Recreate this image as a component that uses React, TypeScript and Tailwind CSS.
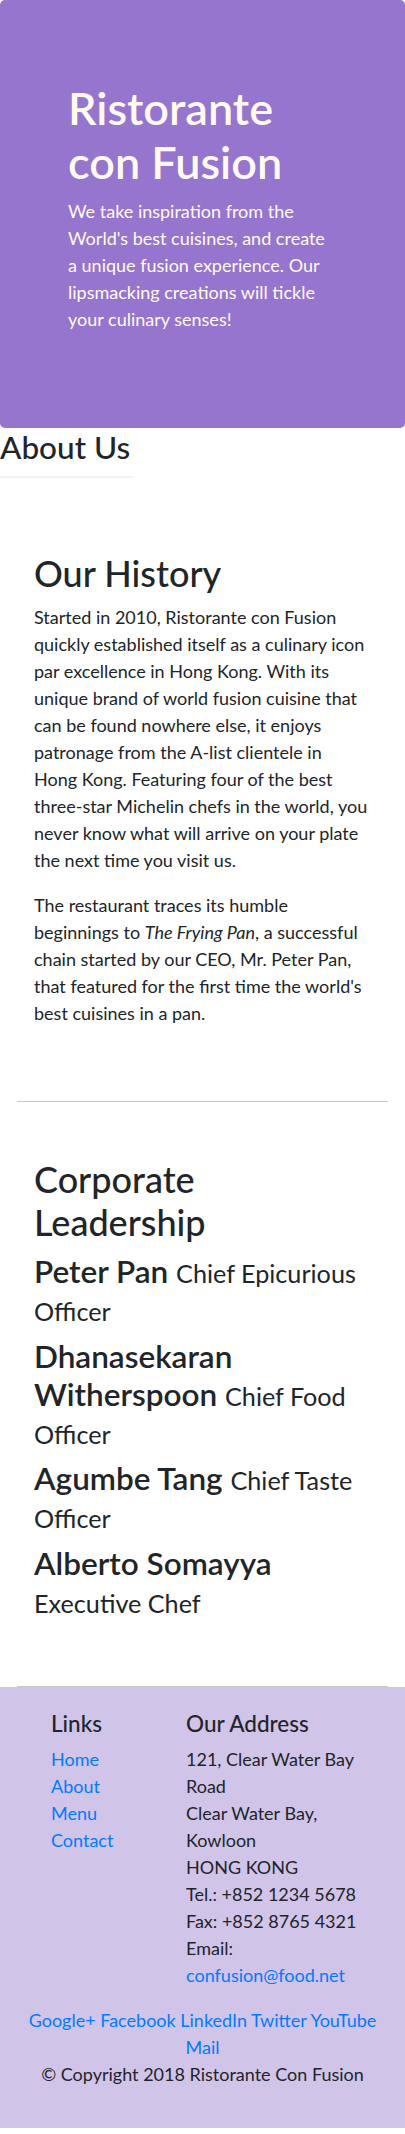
import React from 'react';

const leaders = [
  { name: 'Peter Pan', title: 'Chief Epicurious Officer' },
  { name: 'Dhanasekaran Witherspoon', title: 'Chief Food Officer' },
  { name: 'Agumbe Tang', title: 'Chief Taste Officer' },
  { name: 'Alberto Somayya', title: 'Executive Chef' },
];

// line breaks follow the original page
const history = [
  'Started in 2010, Ristorante con Fusion',
  'quickly established itself as a culinary icon',
  'par excellence in Hong Kong. With its',
  'unique brand of world fusion cuisine that',
  'can be found nowhere else, it enjoys',
  'patronage from the A-list clientele in',
  'Hong Kong. Featuring four of the best',
  'three-star Michelin chefs in the world, you',
  'never know what will arrive on your plate',
  'the next time you visit us.',
];

const links = ['Home', 'About', 'Menu', 'Contact'];
const socials = ['Google+', 'Facebook', 'LinkedIn', 'Twitter', 'YouTube', 'Mail'];

export default function App() {
  return (
    <div className="font-['Lato',sans-serif] text-[18px] leading-[27px] text-[#212529] bg-white">
      {/* jumbotron */}
      <header className="bg-[#9575cd] rounded-[5px] pl-[68px] pt-[81px] pb-[95px]">
        <div className="w-[262px] text-[#fffaf0]">
          <h1 className="text-[45px] leading-[54px] font-semibold mb-[9px]">Ristorante con Fusion</h1>
          <p>
            We take inspiration from the World's best cuisines, and create a unique fusion experience. Our
            lipsmacking creations will tickle your culinary senses!
          </p>
        </div>
      </header>

      <div className="mt-px">
        <h3 className="text-[31.5px] leading-[37.8px] font-medium mb-[9px]">About Us</h3>
        <hr className="mt-[8px] mb-[18px] w-[133px] border-0 h-[2px] bg-[#f2f2f2]" />
      </div>

      <section className="mx-[17px] px-[17px] py-[56px] border-b border-[#c8c8c8]">
        <h2 className="text-[36px] leading-[43.2px] font-medium mb-[9px]">Our History</h2>
        <p className="mb-[18px]">
          {history.map((line, i) => (
            <React.Fragment key={i}>
              {line}
              {i < history.length - 1 && <br />}
            </React.Fragment>
          ))}
        </p>
        <p className="mb-[18px]">
          The restaurant traces its humble beginnings to <em>The Frying Pan</em>, a successful chain started
          by our CEO, Mr. Peter Pan, that featured for the first time the world's best cuisines in a pan.
        </p>
      </section>

      <section className="mx-[17px] px-[17px] py-[56px] border-b border-[#c8c8c8]">
        <h2 className="text-[36px] leading-[43.2px] font-medium mb-[9px]">Corporate Leadership</h2>
        {leaders.map((l) => (
          <h3 key={l.name} className="text-[31.5px] leading-[1.2] font-semibold mb-[9px]">
            {l.name} <small className="text-[25.2px] leading-[1.2] font-normal">{l.title}</small>
          </h3>
        ))}
      </section>

      <footer className="bg-[#d1c4e9] pt-[23px] pb-[22px]">
        <div className="flex">
          <div className="ml-[51px] w-[135px]">
            <h5 className="text-[22.5px] leading-[27px] font-medium mb-[9px]">Links</h5>
            <ul>
              {links.map((x) => (
                <li key={x}>
                  <a href="#" className="text-[#007bff]">
                    {x}
                  </a>
                </li>
              ))}
            </ul>
          </div>
          <div className="w-[190px]">
            <h5 className="text-[22.5px] leading-[27px] font-medium mb-[9px]">Our Address</h5>
            <address className="not-italic mb-[18px]">
              121, Clear Water Bay Road
              <br />
              Clear Water Bay, Kowloon
              <br />
              HONG KONG
              <br />
              Tel.: +852 1234 5678
              <br />
              Fax: +852 8765 4321
              <br />
              Email:{' '}
              <a href="#" className="text-[#007bff]">
                confusion@food.net
              </a>
            </address>
          </div>
        </div>
        <div className="px-[17px] text-center">
          {socials.map((s, i) => (
            <React.Fragment key={s}>
              <a href="#" className="text-[#007bff]">
                {s}
              </a>
              {i < socials.length - 1 ? ' ' : ''}
            </React.Fragment>
          ))}
        </div>
        <p className="text-center mb-[18px]">© Copyright 2018 Ristorante Con Fusion</p>
      </footer>
    </div>
  );
}
